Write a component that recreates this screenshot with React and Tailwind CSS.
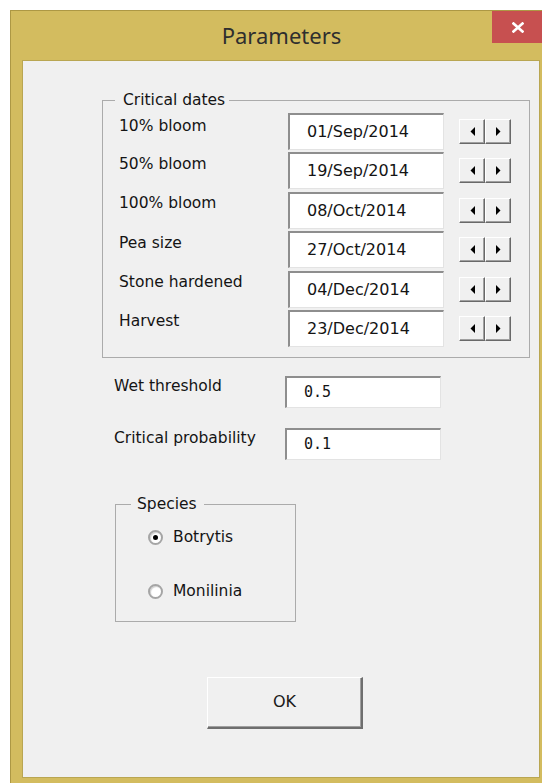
import React from "react";

const sans = "font-['DejaVu_Sans',sans-serif]";
const mono = "font-['DejaVu_Sans_Mono',monospace]";

const dates = [
  ["10% bloom", "01/Sep/2014", "pt-[4px]"],
  ["50% bloom", "19/Sep/2014", "pt-[3px]"],
  ["100% bloom", "08/Oct/2014", "pt-[2px]"],
  ["Pea size", "27/Oct/2014", "pt-[3px]"],
  ["Stone hardened", "04/Dec/2014", "pt-[2px]"],
  ["Harvest", "23/Dec/2014", "pt-[2px]"],
];

function Arrow({ dir }) {
  return (
    <svg width="5" height="9" viewBox="0 0 5 9" className="block">
      {dir === "left" ? (
        <path d="M5 0 L0.5 4.5 L5 9 Z" fill="#000" />
      ) : (
        <path d="M0 0 L4.5 4.5 L0 9 Z" fill="#000" />
      )}
    </svg>
  );
}

function SpinButton({ dir }) {
  return (
    <div className="w-[26px] h-[25px] bg-[#F0F0F0] border-t border-l border-t-white border-l-white border-r border-b border-r-[#696969] border-b-[#696969] shadow-[inset_-1px_-1px_0_#A0A0A0] flex items-center justify-center">
      <Arrow dir={dir} />
    </div>
  );
}

function TextBox({ children, className = "", textClass = "" }) {
  return (
    <div
      className={`bg-white border-t-2 border-l-2 border-t-[#8E8E8E] border-l-[#8E8E8E] border-r border-b border-r-[#E3E3E3] border-b-[#E3E3E3] flex items-center ${className}`}
    >
      <span className={textClass}>{children}</span>
    </div>
  );
}

function Radio({ checked }) {
  return (
    <div className="w-[15px] h-[15px] rounded-full border-2 border-[#A5A5A5] bg-white shadow-[inset_1px_1px_1px_#D0D0D0] flex items-center justify-center shrink-0">
      {checked && <div className="w-[5px] h-[5px] rounded-full bg-black" />}
    </div>
  );
}

export default function App() {
  return (
    <div className="w-[542px] h-[783px] bg-white overflow-hidden pl-[10px] pt-[10px]">
      <div className="relative w-[542px] h-[790px] bg-[#D3BC5F] border-l border-t border-[#AD9844] flex flex-col">
        {/* title bar */}
        <div className="h-[49px] shrink-0 flex items-center justify-center">
          <span className="font-['Noto_Sans',sans-serif] text-[22px] leading-none text-[#2E2E2E] -mt-[1px]">
            Parameters
          </span>
        </div>
        <div className="absolute left-[481px] top-0 w-[52px] h-[32px] bg-[#C75050] flex items-center justify-center">
          <svg width="12" height="11" viewBox="0 0 12 11">
            <path d="M1.5 1.5 L10.5 9.5 M10.5 1.5 L1.5 9.5" stroke="#fff" strokeWidth="2.6" strokeLinecap="square" />
          </svg>
        </div>

        {/* client area */}
        <div className={`ml-[11px] w-[518px] h-[718px] bg-[#F0F0F0] border border-[#B9A652] flex flex-col text-[#141414] ${sans}`}>
          <fieldset className="ml-[79px] mt-[30px] w-[428px] border border-[#ABABAB] pb-[10px]">
            <legend className="ml-[12px] pl-[8px] pr-[4px] text-[15.5px] leading-[19px]">
              Critical dates
            </legend>
            <div className="mt-[3px] flex flex-col gap-[2.4px]">
              {dates.map(([label, value, pad]) => (
                <div key={label} className="flex h-[37px]">
                  <div className={`w-[185px] pl-[16px] text-[15.5px] leading-[19px] ${pad}`}>{label}</div>
                  <TextBox className="w-[156px] h-[37px] pl-[17px]" textClass="text-[16px] leading-none">
                    {value}
                  </TextBox>
                  <div className="ml-[15px] mt-[6px] flex">
                    <SpinButton dir="left" />
                    <SpinButton dir="right" />
                  </div>
                </div>
              ))}
            </div>
          </fieldset>

          <div className="mt-[18px] ml-[91px] flex">
            <div className="w-[171px] text-[15.5px] leading-[19px] pt-[1px]">Wet threshold</div>
            <TextBox className="w-[156px] h-[32px] pl-[17px]" textClass={`${mono} text-[15px] leading-none`}>
              0.5
            </TextBox>
          </div>
          <div className="mt-[20px] ml-[91px] flex">
            <div className="w-[171px] text-[15.5px] leading-[19px] pt-[1px]">Critical probability</div>
            <TextBox className="w-[156px] h-[32px] pl-[17px]" textClass={`${mono} text-[15px] leading-none`}>
              0.1
            </TextBox>
          </div>

          <fieldset className="ml-[92px] mt-[35px] w-[181px] border border-[#ABABAB] pb-[20px]">
            <legend className="ml-[15px] pl-[6px] pr-[7px] text-[15.5px] leading-[19px]">Species</legend>
            <div className="mt-[14px] pl-[32px] flex flex-col gap-[35px]">
              <div className="flex items-center h-[19px] gap-[10px]">
                <Radio checked />
                <span className="text-[15.5px] leading-[19px]">Botrytis</span>
              </div>
              <div className="flex items-center h-[19px] gap-[10px]">
                <Radio />
                <span className="text-[15.5px] leading-[19px]">Monilinia</span>
              </div>
            </div>
          </fieldset>

          <button className="ml-[184px] mt-[55px] w-[156px] h-[52px] bg-[#F0F0F0] border-t border-l border-t-white border-l-white border-r-2 border-b-2 border-r-[#6E6E6E] border-b-[#6E6E6E] shadow-[inset_-1px_-1px_0_#A0A0A0] flex items-center justify-center text-[16px] text-[#1A1A1A]">
            OK
          </button>
        </div>
      </div>
    </div>
  );
}
